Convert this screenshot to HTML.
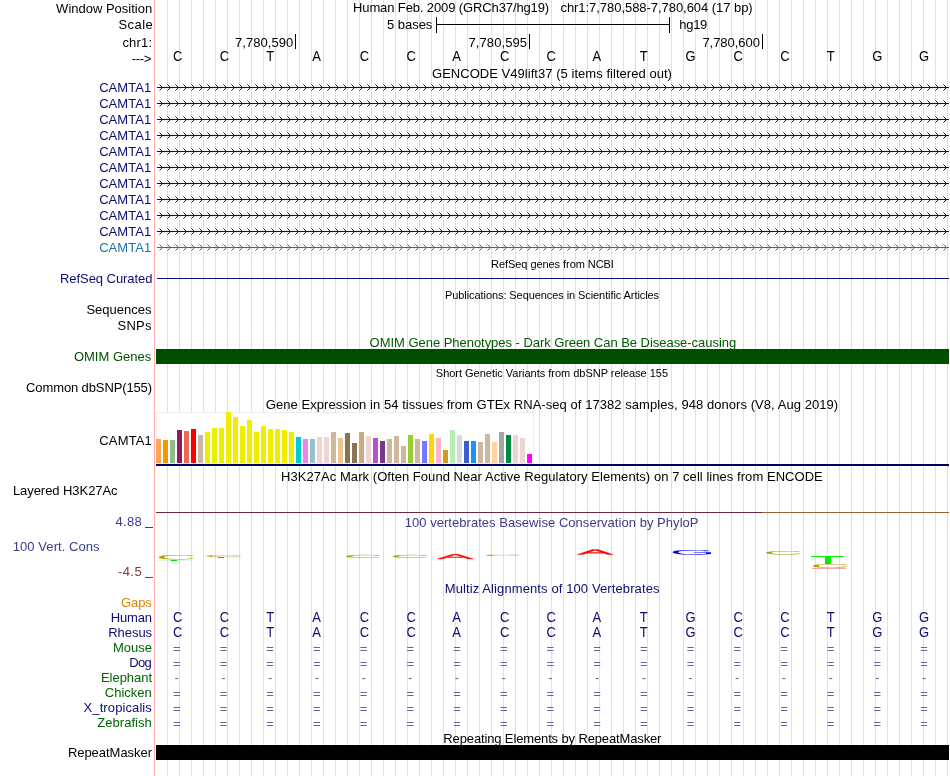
<!DOCTYPE html><html><head><meta charset="utf-8"><style>html,body{margin:0;padding:0;background:#fff;width:950px;height:776px;overflow:hidden}svg{display:block;will-change:transform}text{font-family:"Liberation Sans",sans-serif;font-size:13px}.s{font-size:11px}</style></head><body>
<svg width="950" height="776" viewBox="0 0 950 776">
<defs>
<pattern id="chevN" x="157" y="84" width="8" height="16" patternUnits="userSpaceOnUse"><g fill="rgb(12,12,120)" shape-rendering="crispEdges"><rect x="0" y="3" width="8" height="1"/><rect x="3" y="1" width="1" height="1"/><rect x="4" y="2" width="1" height="3"/><rect x="3" y="5" width="1" height="1"/><rect x="2" y="0" width="1" height="1" fill-opacity="0.45"/><rect x="2" y="6" width="1" height="1" fill-opacity="0.45"/></g></pattern>
<pattern id="chevT" x="157" y="84" width="8" height="16" patternUnits="userSpaceOnUse"><g fill="rgb(30,115,175)" shape-rendering="crispEdges"><rect x="0" y="3" width="8" height="1"/><rect x="3" y="1" width="1" height="1"/><rect x="4" y="2" width="1" height="3"/><rect x="3" y="5" width="1" height="1"/><rect x="2" y="0" width="1" height="1" fill-opacity="0.45"/><rect x="2" y="6" width="1" height="1" fill-opacity="0.45"/></g></pattern>
</defs>
<rect width="950" height="776" fill="#fff"/>
<path d="M167 0h1v776h-1zM179 0h1v776h-1zM191 0h1v776h-1zM203 0h1v776h-1zM215 0h1v776h-1zM227 0h1v776h-1zM239 0h1v776h-1zM251 0h1v776h-1zM263 0h1v776h-1zM275 0h1v776h-1zM287 0h1v776h-1zM299 0h1v776h-1zM311 0h1v776h-1zM323 0h1v776h-1zM335 0h1v776h-1zM347 0h1v776h-1zM359 0h1v776h-1zM371 0h1v776h-1zM383 0h1v776h-1zM395 0h1v776h-1zM407 0h1v776h-1zM419 0h1v776h-1zM431 0h1v776h-1zM443 0h1v776h-1zM455 0h1v776h-1zM467 0h1v776h-1zM479 0h1v776h-1zM491 0h1v776h-1zM503 0h1v776h-1zM515 0h1v776h-1zM527 0h1v776h-1zM539 0h1v776h-1zM551 0h1v776h-1zM563 0h1v776h-1zM575 0h1v776h-1zM587 0h1v776h-1zM599 0h1v776h-1zM611 0h1v776h-1zM623 0h1v776h-1zM635 0h1v776h-1zM647 0h1v776h-1zM659 0h1v776h-1zM671 0h1v776h-1zM683 0h1v776h-1zM695 0h1v776h-1zM707 0h1v776h-1zM719 0h1v776h-1zM731 0h1v776h-1zM743 0h1v776h-1zM755 0h1v776h-1zM767 0h1v776h-1zM779 0h1v776h-1zM791 0h1v776h-1zM803 0h1v776h-1zM815 0h1v776h-1zM827 0h1v776h-1zM839 0h1v776h-1zM851 0h1v776h-1zM863 0h1v776h-1zM875 0h1v776h-1zM887 0h1v776h-1zM899 0h1v776h-1zM911 0h1v776h-1zM923 0h1v776h-1zM935 0h1v776h-1zM947 0h1v776h-1z" fill="rgb(220,220,255)" shape-rendering="crispEdges"/>
<rect x="154" y="0" width="1" height="776" fill="rgb(255,175,175)" shape-rendering="crispEdges"/>
<text id="t1" x="56.12" y="13" fill="#000" textLength="96.04" lengthAdjust="spacing">Window Position</text>
<text id="t2" x="118.40" y="29" fill="#000" textLength="34.34" lengthAdjust="spacing">Scale</text>
<text id="t3" x="122.38" y="47" fill="#000" textLength="29.82" lengthAdjust="spacing">chr1:</text>
<text id="t4" x="131.71" y="63" fill="#000" textLength="19.67" lengthAdjust="spacing">---&gt;</text>
<text id="hf1" x="353.00" y="12" fill="#000" textLength="196.16" lengthAdjust="spacing">Human Feb. 2009 (GRCh37/hg19)</text>
<text id="hf2" x="560.43" y="12" fill="#000" textLength="192.27" lengthAdjust="spacing">chr1:7,780,588-7,780,604 (17 bp)</text>
<text id="t7" x="386.90" y="29" fill="#000" textLength="45.47" lengthAdjust="spacing">5 bases</text>
<text id="t8" x="679.31" y="29" fill="#000" textLength="27.97" lengthAdjust="spacing">hg19</text>
<g fill="#000" shape-rendering="crispEdges">
<rect x="436" y="24" width="234" height="1"/><rect x="436" y="17" width="1" height="16"/><rect x="669" y="17" width="1" height="16"/>
<rect x="295" y="34" width="1" height="15"/>
<rect x="529" y="34" width="1" height="15"/>
<rect x="762" y="34" width="1" height="15"/>
</g>
<text id="t9" x="235.01" y="47" fill="#000" textLength="58.19" lengthAdjust="spacing">7,780,590</text>
<text id="t10" x="468.58" y="47" fill="#000" textLength="58.37" lengthAdjust="spacing">7,780,595</text>
<text id="t11" x="702.40" y="47" fill="#000" textLength="57.53" lengthAdjust="spacing">7,780,600</text>
<text transform="matrix(1,0,0,1.08,177.65,61)" text-anchor="middle" fill="#000">C</text>
<text transform="matrix(1,0,0,1.08,224.36,61)" text-anchor="middle" fill="#000">C</text>
<text transform="matrix(1,0,0,1.08,270.17,61)" text-anchor="middle" fill="#000">T</text>
<text transform="matrix(1,0,0,1.08,316.47,61)" text-anchor="middle" fill="#000">A</text>
<text transform="matrix(1,0,0,1.08,364.48,61)" text-anchor="middle" fill="#000">C</text>
<text transform="matrix(1,0,0,1.08,411.18,61)" text-anchor="middle" fill="#000">C</text>
<text transform="matrix(1,0,0,1.08,456.59,61)" text-anchor="middle" fill="#000">A</text>
<text transform="matrix(1,0,0,1.08,504.60,61)" text-anchor="middle" fill="#000">C</text>
<text transform="matrix(1,0,0,1.08,551.30,61)" text-anchor="middle" fill="#000">C</text>
<text transform="matrix(1,0,0,1.08,596.71,61)" text-anchor="middle" fill="#000">A</text>
<text transform="matrix(1,0,0,1.08,643.81,61)" text-anchor="middle" fill="#000">T</text>
<text transform="matrix(1,0,0,1.08,690.52,61)" text-anchor="middle" fill="#000">G</text>
<text transform="matrix(1,0,0,1.08,738.12,61)" text-anchor="middle" fill="#000">C</text>
<text transform="matrix(1,0,0,1.08,784.83,61)" text-anchor="middle" fill="#000">C</text>
<text transform="matrix(1,0,0,1.08,830.64,61)" text-anchor="middle" fill="#000">T</text>
<text transform="matrix(1,0,0,1.08,877.34,61)" text-anchor="middle" fill="#000">G</text>
<text transform="matrix(1,0,0,1.08,924.05,61)" text-anchor="middle" fill="#000">G</text>
<text id="t12" x="431.98" y="78" fill="#000" textLength="239.95" lengthAdjust="spacing">GENCODE V49lift37 (5 items filtered out)</text>
<text id="t13" x="99.13" y="92" fill="rgb(12,12,120)" textLength="52.03" lengthAdjust="spacing">CAMTA1</text>
<rect x="157" y="84" width="792" height="7" fill="url(#chevN)" shape-rendering="crispEdges"/>
<text id="t14" x="99.13" y="108" fill="rgb(12,12,120)" textLength="52.03" lengthAdjust="spacing">CAMTA1</text>
<rect x="157" y="100" width="792" height="7" fill="url(#chevN)" shape-rendering="crispEdges"/>
<text id="t15" x="99.13" y="124" fill="rgb(12,12,120)" textLength="52.03" lengthAdjust="spacing">CAMTA1</text>
<rect x="157" y="116" width="792" height="7" fill="url(#chevN)" shape-rendering="crispEdges"/>
<text id="t16" x="99.13" y="140" fill="rgb(12,12,120)" textLength="52.03" lengthAdjust="spacing">CAMTA1</text>
<rect x="157" y="132" width="792" height="7" fill="url(#chevN)" shape-rendering="crispEdges"/>
<text id="t17" x="99.13" y="156" fill="rgb(12,12,120)" textLength="52.03" lengthAdjust="spacing">CAMTA1</text>
<rect x="157" y="148" width="792" height="7" fill="url(#chevN)" shape-rendering="crispEdges"/>
<text id="t18" x="99.13" y="172" fill="rgb(12,12,120)" textLength="52.03" lengthAdjust="spacing">CAMTA1</text>
<rect x="157" y="164" width="792" height="7" fill="url(#chevN)" shape-rendering="crispEdges"/>
<text id="t19" x="99.13" y="188" fill="rgb(12,12,120)" textLength="52.03" lengthAdjust="spacing">CAMTA1</text>
<rect x="157" y="180" width="792" height="7" fill="url(#chevN)" shape-rendering="crispEdges"/>
<text id="t20" x="99.13" y="204" fill="rgb(12,12,120)" textLength="52.03" lengthAdjust="spacing">CAMTA1</text>
<rect x="157" y="196" width="792" height="7" fill="url(#chevN)" shape-rendering="crispEdges"/>
<text id="t21" x="99.13" y="220" fill="rgb(12,12,120)" textLength="52.03" lengthAdjust="spacing">CAMTA1</text>
<rect x="157" y="212" width="792" height="7" fill="url(#chevN)" shape-rendering="crispEdges"/>
<text id="t22" x="99.13" y="236" fill="rgb(12,12,120)" textLength="52.03" lengthAdjust="spacing">CAMTA1</text>
<rect x="157" y="228" width="792" height="7" fill="url(#chevN)" shape-rendering="crispEdges"/>
<text id="t23" x="99.13" y="252" fill="rgb(30,115,175)" textLength="51.99" lengthAdjust="spacing">CAMTA1</text>
<rect x="157" y="244" width="792" height="7" fill="url(#chevT)" shape-rendering="crispEdges"/>
<text id="t24" x="491.11" y="268" fill="#000" class="s" textLength="122.76" lengthAdjust="spacing">RefSeq genes from NCBI</text>
<text id="t25" x="60.05" y="283" fill="rgb(12,12,120)" textLength="92.38" lengthAdjust="spacing">RefSeq Curated</text>
<rect x="157" y="278" width="792" height="1" fill="rgb(12,12,120)" shape-rendering="crispEdges"/>
<text id="t26" x="445.02" y="299" fill="#000" class="s" textLength="214.08" lengthAdjust="spacing">Publications: Sequences in Scientific Articles</text>
<text id="t27" x="86.40" y="314" fill="#000" textLength="65.10" lengthAdjust="spacing">Sequences</text>
<text id="t28" x="117.54" y="330" fill="#000" textLength="33.96" lengthAdjust="spacing">SNPs</text>
<text id="t29" x="369.57" y="347" fill="rgb(0,90,0)" textLength="366.61" lengthAdjust="spacing">OMIM Gene Phenotypes - Dark Green Can Be Disease-causing</text>
<text id="t30" x="73.88" y="361" fill="rgb(0,80,0)" textLength="77.47" lengthAdjust="spacing">OMIM Genes</text>
<rect x="156" y="349" width="793" height="15" fill="rgb(0,77,0)" shape-rendering="crispEdges"/>
<text id="t31" x="435.85" y="377" fill="#000" class="s" textLength="232.21" lengthAdjust="spacing">Short Genetic Variants from dbSNP release 155</text>
<text id="t32" x="26.11" y="392" fill="#000" textLength="125.95" lengthAdjust="spacing">Common dbSNP(155)</text>
<text id="t33" x="265.82" y="409" fill="#000" textLength="572.35" lengthAdjust="spacing">Gene Expression in 54 tissues from GTEx RNA-seq of 17382 samples, 948 donors (V8, Aug 2019)</text>
<text id="t34" x="99.31" y="445" fill="#000" textLength="52.52" lengthAdjust="spacing">CAMTA1</text>
<rect x="156" y="412" width="377" height="51" fill="#fff" stroke="none" shape-rendering="crispEdges"/>
<path d="M156 412h377v51h-377z" fill="none" stroke="rgb(238,238,238)" stroke-width="1" transform="translate(0.5,0.5)" />
<g shape-rendering="crispEdges">
<rect x="156" y="439" width="5" height="24" fill="#FFA54F"/>
<rect x="163" y="440" width="5" height="23" fill="#EE9A00"/>
<rect x="170" y="440" width="5" height="23" fill="#8FBC8F"/>
<rect x="177" y="430" width="5" height="33" fill="#8B1C62"/>
<rect x="184" y="431" width="5" height="32" fill="#EE6A50"/>
<rect x="191" y="429" width="5" height="34" fill="#FF0000"/>
<rect x="198" y="435" width="5" height="28" fill="#CDB79E"/>
<rect x="205" y="432" width="5" height="31" fill="#EEEE00"/>
<rect x="212" y="428" width="5" height="35" fill="#EEEE00"/>
<rect x="219" y="428" width="5" height="35" fill="#EEEE00"/>
<rect x="226" y="412" width="5" height="51" fill="#EEEE00"/>
<rect x="233" y="417" width="5" height="46" fill="#EEEE00"/>
<rect x="240" y="426" width="5" height="37" fill="#EEEE00"/>
<rect x="247" y="420" width="5" height="43" fill="#EEEE00"/>
<rect x="254" y="432" width="5" height="31" fill="#EEEE00"/>
<rect x="261" y="426" width="5" height="37" fill="#EEEE00"/>
<rect x="268" y="429" width="5" height="34" fill="#EEEE00"/>
<rect x="275" y="429" width="5" height="34" fill="#EEEE00"/>
<rect x="282" y="430" width="5" height="33" fill="#EEEE00"/>
<rect x="289" y="432" width="5" height="31" fill="#EEEE00"/>
<rect x="296" y="437" width="5" height="26" fill="#00CDCD"/>
<rect x="303" y="439" width="5" height="24" fill="#EE82EE"/>
<rect x="310" y="439" width="5" height="24" fill="#9AC0CD"/>
<rect x="317" y="437" width="5" height="26" fill="#EED5D2"/>
<rect x="324" y="437" width="5" height="26" fill="#EED5D2"/>
<rect x="331" y="432" width="5" height="31" fill="#CDB79E"/>
<rect x="338" y="438" width="5" height="25" fill="#EEC591"/>
<rect x="345" y="433" width="5" height="30" fill="#8B7355"/>
<rect x="352" y="443" width="5" height="20" fill="#8B7355"/>
<rect x="359" y="432" width="5" height="31" fill="#CDAA7D"/>
<rect x="366" y="436" width="5" height="27" fill="#EED5D2"/>
<rect x="373" y="438" width="5" height="25" fill="#B452CD"/>
<rect x="380" y="441" width="5" height="22" fill="#7A378B"/>
<rect x="387" y="439" width="5" height="24" fill="#CDB79E"/>
<rect x="394" y="436" width="5" height="27" fill="#CDB79E"/>
<rect x="401" y="446" width="5" height="17" fill="#CDB79E"/>
<rect x="408" y="435" width="5" height="28" fill="#9ACD32"/>
<rect x="415" y="439" width="5" height="24" fill="#CDB79E"/>
<rect x="422" y="441" width="5" height="22" fill="#7777FF"/>
<rect x="429" y="434" width="5" height="29" fill="#FFD700"/>
<rect x="436" y="438" width="5" height="25" fill="#FFB6C1"/>
<rect x="443" y="450" width="5" height="13" fill="#CD9B1D"/>
<rect x="450" y="430" width="5" height="33" fill="#B4EEB4"/>
<rect x="457" y="435" width="5" height="28" fill="#D9D9D9"/>
<rect x="464" y="441" width="5" height="22" fill="#3A5FCD"/>
<rect x="471" y="441" width="5" height="22" fill="#1E90FF"/>
<rect x="478" y="442" width="5" height="21" fill="#CDB79E"/>
<rect x="485" y="434" width="5" height="29" fill="#CDB79E"/>
<rect x="492" y="442" width="5" height="21" fill="#FFD39B"/>
<rect x="499" y="432" width="5" height="31" fill="#A6A6A6"/>
<rect x="506" y="435" width="5" height="28" fill="#008B45"/>
<rect x="513" y="435" width="5" height="28" fill="#EED5D2"/>
<rect x="520" y="438" width="5" height="25" fill="#EED5D2"/>
<rect x="527" y="454" width="5" height="9" fill="#FF00FF"/>
</g>
<rect x="156" y="464" width="793" height="2" fill="rgb(0,0,100)" shape-rendering="crispEdges"/>
<text id="t35" x="281.09" y="481" fill="#000" textLength="541.70" lengthAdjust="spacing">H3K27Ac Mark (Often Found Near Active Regulatory Elements) on 7 cell lines from ENCODE</text>
<text id="t36" x="12.91" y="495" fill="#000" textLength="104.68" lengthAdjust="spacing">Layered H3K27Ac</text>
<rect x="156" y="512" width="606" height="1" fill="rgb(112,38,62)" shape-rendering="crispEdges"/>
<rect x="762" y="512" width="187" height="1" fill="rgb(150,100,60)" shape-rendering="crispEdges"/>
<text id="t37" x="404.67" y="527" fill="rgb(60,60,140)" textLength="293.83" lengthAdjust="spacing">100 vertebrates Basewise Conservation by PhyloP</text>
<text id="v488" x="115.43" y="526" fill="rgb(60,60,140)" textLength="26.27" lengthAdjust="spacing">4.88</text>
<rect x="145" y="527" width="8" height="1" fill="rgb(60,60,140)" shape-rendering="crispEdges"/>
<text id="t39" x="12.79" y="551" fill="rgb(60,60,140)" textLength="86.80" lengthAdjust="spacing">100 Vert. Cons</text>
<text id="vm45" x="117.98" y="576" fill="rgb(140,50,50)" textLength="23.63" lengthAdjust="spacing">-4.5</text>
<rect x="145" y="577" width="8" height="1" fill="rgb(140,50,50)" shape-rendering="crispEdges"/>
<rect x="157" y="560" width="34" height="1" fill="rgb(0,220,0)" fill-opacity="0.12"/>
<rect x="171" y="560" width="6" height="1" fill="rgb(0,220,0)"/>
<rect x="206" y="557" width="36" height="1" fill="rgb(0,220,0)" fill-opacity="0.12"/>
<rect x="218" y="557" width="6" height="1" fill="rgb(0,220,0)"/>
<g fill="rgb(170,160,0)" >
<path vector-effect="non-scaling-stroke" transform="matrix(0.02776,0,0,-0.00324,155.913,559.535)" d="M792 1274Q558 1274 428.0 1123.5Q298 973 298 711Q298 452 433.5 294.5Q569 137 800 137Q1096 137 1245 430L1401 352Q1314 170 1156.5 75.0Q999 -20 791 -20Q578 -20 422.5 68.5Q267 157 185.5 321.5Q104 486 104 711Q104 1048 286.0 1239.0Q468 1430 790 1430Q1015 1430 1166.0 1342.0Q1317 1254 1388 1081L1207 1021Q1158 1144 1049.5 1209.0Q941 1274 792 1274Z"/>
<path vector-effect="non-scaling-stroke" transform="matrix(0.02737,0,0,-0.00131,203.353,556.974)" d="M792 1274Q558 1274 428.0 1123.5Q298 973 298 711Q298 452 433.5 294.5Q569 137 800 137Q1096 137 1245 430L1401 352Q1314 170 1156.5 75.0Q999 -20 791 -20Q578 -20 422.5 68.5Q267 157 185.5 321.5Q104 486 104 711Q104 1048 286.0 1239.0Q468 1430 790 1430Q1015 1430 1166.0 1342.0Q1317 1254 1388 1081L1207 1021Q1158 1144 1049.5 1209.0Q941 1274 792 1274Z"/>
<path vector-effect="non-scaling-stroke" transform="matrix(0.02760,0,0,-0.00214,343.029,557.857)" d="M792 1274Q558 1274 428.0 1123.5Q298 973 298 711Q298 452 433.5 294.5Q569 137 800 137Q1096 137 1245 430L1401 352Q1314 170 1156.5 75.0Q999 -20 791 -20Q578 -20 422.5 68.5Q267 157 185.5 321.5Q104 486 104 711Q104 1048 286.0 1239.0Q468 1430 790 1430Q1015 1430 1166.0 1342.0Q1317 1254 1388 1081L1207 1021Q1158 1144 1049.5 1209.0Q941 1274 792 1274Z"/>
<path vector-effect="non-scaling-stroke" transform="matrix(0.02760,0,0,-0.00214,389.829,557.857)" d="M792 1274Q558 1274 428.0 1123.5Q298 973 298 711Q298 452 433.5 294.5Q569 137 800 137Q1096 137 1245 430L1401 352Q1314 170 1156.5 75.0Q999 -20 791 -20Q578 -20 422.5 68.5Q267 157 185.5 321.5Q104 486 104 711Q104 1048 286.0 1239.0Q468 1430 790 1430Q1015 1430 1166.0 1342.0Q1317 1254 1388 1081L1207 1021Q1158 1144 1049.5 1209.0Q941 1274 792 1274Z"/>
<path vector-effect="non-scaling-stroke" transform="matrix(0.02675,0,0,-0.00090,483.018,555.982)" d="M792 1274Q558 1274 428.0 1123.5Q298 973 298 711Q298 452 433.5 294.5Q569 137 800 137Q1096 137 1245 430L1401 352Q1314 170 1156.5 75.0Q999 -20 791 -20Q578 -20 422.5 68.5Q267 157 185.5 321.5Q104 486 104 711Q104 1048 286.0 1239.0Q468 1430 790 1430Q1015 1430 1166.0 1342.0Q1317 1254 1388 1081L1207 1021Q1158 1144 1049.5 1209.0Q941 1274 792 1274Z"/>
<path vector-effect="non-scaling-stroke" transform="matrix(0.02699,0,0,-0.00255,763.194,554.649)" d="M792 1274Q558 1274 428.0 1123.5Q298 973 298 711Q298 452 433.5 294.5Q569 137 800 137Q1096 137 1245 430L1401 352Q1314 170 1156.5 75.0Q999 -20 791 -20Q578 -20 422.5 68.5Q267 157 185.5 321.5Q104 486 104 711Q104 1048 286.0 1239.0Q468 1430 790 1430Q1015 1430 1166.0 1342.0Q1317 1254 1388 1081L1207 1021Q1158 1144 1049.5 1209.0Q941 1274 792 1274Z"/>
<path vector-effect="non-scaling-stroke" transform="matrix(0.02760,0,0,-0.00262,810.029,567.748)" d="M792 1274Q558 1274 428.0 1123.5Q298 973 298 711Q298 452 433.5 294.5Q569 137 800 137Q1096 137 1245 430L1401 352Q1314 170 1156.5 75.0Q999 -20 791 -20Q578 -20 422.5 68.5Q267 157 185.5 321.5Q104 486 104 711Q104 1048 286.0 1239.0Q468 1430 790 1430Q1015 1430 1166.0 1342.0Q1317 1254 1388 1081L1207 1021Q1158 1144 1049.5 1209.0Q941 1274 792 1274Z"/>
</g>
<g fill="rgb(255,0,0)" stroke="rgb(255,0,0)" stroke-width="0.4">
<path vector-effect="non-scaling-stroke" transform="matrix(0.02636,0,0,-0.00326,437.295,558.900)" d="M1167 0 1006 412H364L202 0H4L579 1409H796L1362 0ZM685 1265 676 1237Q651 1154 602 1024L422 561H949L768 1026Q740 1095 712 1182Z"/>
<path vector-effect="non-scaling-stroke" transform="matrix(0.02622,0,0,-0.00355,577.295,554.600)" d="M1167 0 1006 412H364L202 0H4L579 1409H796L1362 0ZM685 1265 676 1237Q651 1154 602 1024L422 561H949L768 1026Q740 1095 712 1182Z"/>
</g>
<g fill="rgb(0,0,255)" >
<path vector-effect="non-scaling-stroke" transform="matrix(0.02872,0,0,-0.00331,669.642,554.634)" d="M103 711Q103 1054 287.0 1242.0Q471 1430 804 1430Q1038 1430 1184.0 1351.0Q1330 1272 1409 1098L1227 1044Q1167 1164 1061.5 1219.0Q956 1274 799 1274Q555 1274 426.0 1126.5Q297 979 297 711Q297 444 434.0 289.5Q571 135 813 135Q951 135 1070.5 177.0Q1190 219 1264 291V545H843V705H1440V219Q1328 105 1165.5 42.5Q1003 -20 813 -20Q592 -20 432.0 68.0Q272 156 187.5 321.5Q103 487 103 711Z"/>
</g>
<g fill="rgb(0,240,0)" shape-rendering="crispEdges"><rect x="811" y="556" width="33" height="1"/><rect x="825" y="557" width="6" height="7"/></g>
<rect x="812" y="568" width="34" height="1" fill="rgb(255,60,60)" fill-opacity="0.45" shape-rendering="crispEdges"/>
<text id="t41" x="444.72" y="593" fill="rgb(12,12,120)" textLength="214.79" lengthAdjust="spacing">Multiz Alignments of 100 Vertebrates</text>
<text id="t42" x="121.08" y="607" fill="rgb(230,128,0)" textLength="30.73" lengthAdjust="spacing">Gaps</text>
<text id="t43" x="110.77" y="622" fill="rgb(12,12,120)" textLength="41.20" lengthAdjust="spacing">Human</text>
<text transform="matrix(1,0,0,1.08,177.65,621.5)" text-anchor="middle" fill="rgb(12,12,120)">C</text>
<text transform="matrix(1,0,0,1.08,224.36,621.5)" text-anchor="middle" fill="rgb(12,12,120)">C</text>
<text transform="matrix(1,0,0,1.08,270.17,621.5)" text-anchor="middle" fill="rgb(12,12,120)">T</text>
<text transform="matrix(1,0,0,1.08,316.47,621.5)" text-anchor="middle" fill="rgb(12,12,120)">A</text>
<text transform="matrix(1,0,0,1.08,364.48,621.5)" text-anchor="middle" fill="rgb(12,12,120)">C</text>
<text transform="matrix(1,0,0,1.08,411.18,621.5)" text-anchor="middle" fill="rgb(12,12,120)">C</text>
<text transform="matrix(1,0,0,1.08,456.59,621.5)" text-anchor="middle" fill="rgb(12,12,120)">A</text>
<text transform="matrix(1,0,0,1.08,504.60,621.5)" text-anchor="middle" fill="rgb(12,12,120)">C</text>
<text transform="matrix(1,0,0,1.08,551.30,621.5)" text-anchor="middle" fill="rgb(12,12,120)">C</text>
<text transform="matrix(1,0,0,1.08,596.71,621.5)" text-anchor="middle" fill="rgb(12,12,120)">A</text>
<text transform="matrix(1,0,0,1.08,643.81,621.5)" text-anchor="middle" fill="rgb(12,12,120)">T</text>
<text transform="matrix(1,0,0,1.08,690.52,621.5)" text-anchor="middle" fill="rgb(12,12,120)">G</text>
<text transform="matrix(1,0,0,1.08,738.12,621.5)" text-anchor="middle" fill="rgb(12,12,120)">C</text>
<text transform="matrix(1,0,0,1.08,784.83,621.5)" text-anchor="middle" fill="rgb(12,12,120)">C</text>
<text transform="matrix(1,0,0,1.08,830.64,621.5)" text-anchor="middle" fill="rgb(12,12,120)">T</text>
<text transform="matrix(1,0,0,1.08,877.34,621.5)" text-anchor="middle" fill="rgb(12,12,120)">G</text>
<text transform="matrix(1,0,0,1.08,924.05,621.5)" text-anchor="middle" fill="rgb(12,12,120)">G</text>
<text id="t44" x="108.24" y="637" fill="rgb(12,12,120)" textLength="43.82" lengthAdjust="spacing">Rhesus</text>
<text transform="matrix(1,0,0,1.08,177.65,636.5)" text-anchor="middle" fill="rgb(12,12,120)">C</text>
<text transform="matrix(1,0,0,1.08,224.36,636.5)" text-anchor="middle" fill="rgb(12,12,120)">C</text>
<text transform="matrix(1,0,0,1.08,270.17,636.5)" text-anchor="middle" fill="rgb(12,12,120)">T</text>
<text transform="matrix(1,0,0,1.08,316.47,636.5)" text-anchor="middle" fill="rgb(12,12,120)">A</text>
<text transform="matrix(1,0,0,1.08,364.48,636.5)" text-anchor="middle" fill="rgb(12,12,120)">C</text>
<text transform="matrix(1,0,0,1.08,411.18,636.5)" text-anchor="middle" fill="rgb(12,12,120)">C</text>
<text transform="matrix(1,0,0,1.08,456.59,636.5)" text-anchor="middle" fill="rgb(12,12,120)">A</text>
<text transform="matrix(1,0,0,1.08,504.60,636.5)" text-anchor="middle" fill="rgb(12,12,120)">C</text>
<text transform="matrix(1,0,0,1.08,551.30,636.5)" text-anchor="middle" fill="rgb(12,12,120)">C</text>
<text transform="matrix(1,0,0,1.08,596.71,636.5)" text-anchor="middle" fill="rgb(12,12,120)">A</text>
<text transform="matrix(1,0,0,1.08,643.81,636.5)" text-anchor="middle" fill="rgb(12,12,120)">T</text>
<text transform="matrix(1,0,0,1.08,690.52,636.5)" text-anchor="middle" fill="rgb(12,12,120)">G</text>
<text transform="matrix(1,0,0,1.08,738.12,636.5)" text-anchor="middle" fill="rgb(12,12,120)">C</text>
<text transform="matrix(1,0,0,1.08,784.83,636.5)" text-anchor="middle" fill="rgb(12,12,120)">C</text>
<text transform="matrix(1,0,0,1.08,830.64,636.5)" text-anchor="middle" fill="rgb(12,12,120)">T</text>
<text transform="matrix(1,0,0,1.08,877.34,636.5)" text-anchor="middle" fill="rgb(12,12,120)">G</text>
<text transform="matrix(1,0,0,1.08,924.05,636.5)" text-anchor="middle" fill="rgb(12,12,120)">G</text>
<text id="t45" x="112.98" y="652" fill="rgb(0,100,0)" textLength="39.10" lengthAdjust="spacing">Mouse</text>
<text x="176.75" y="653" text-anchor="middle" fill="rgb(100,100,160)">=</text>
<text x="223.46" y="653" text-anchor="middle" fill="rgb(100,100,160)">=</text>
<text x="270.17" y="653" text-anchor="middle" fill="rgb(100,100,160)">=</text>
<text x="316.87" y="653" text-anchor="middle" fill="rgb(100,100,160)">=</text>
<text x="363.58" y="653" text-anchor="middle" fill="rgb(100,100,160)">=</text>
<text x="410.28" y="653" text-anchor="middle" fill="rgb(100,100,160)">=</text>
<text x="456.99" y="653" text-anchor="middle" fill="rgb(100,100,160)">=</text>
<text x="503.7" y="653" text-anchor="middle" fill="rgb(100,100,160)">=</text>
<text x="550.4" y="653" text-anchor="middle" fill="rgb(100,100,160)">=</text>
<text x="597.11" y="653" text-anchor="middle" fill="rgb(100,100,160)">=</text>
<text x="643.81" y="653" text-anchor="middle" fill="rgb(100,100,160)">=</text>
<text x="690.52" y="653" text-anchor="middle" fill="rgb(100,100,160)">=</text>
<text x="737.23" y="653" text-anchor="middle" fill="rgb(100,100,160)">=</text>
<text x="783.93" y="653" text-anchor="middle" fill="rgb(100,100,160)">=</text>
<text x="830.64" y="653" text-anchor="middle" fill="rgb(100,100,160)">=</text>
<text x="877.34" y="653" text-anchor="middle" fill="rgb(100,100,160)">=</text>
<text x="924.05" y="653" text-anchor="middle" fill="rgb(100,100,160)">=</text>
<text id="t46" x="129.35" y="667" fill="rgb(12,12,120)" textLength="22.44" lengthAdjust="spacing">Dog</text>
<text x="176.75" y="668" text-anchor="middle" fill="rgb(100,100,160)">=</text>
<text x="223.46" y="668" text-anchor="middle" fill="rgb(100,100,160)">=</text>
<text x="270.17" y="668" text-anchor="middle" fill="rgb(100,100,160)">=</text>
<text x="316.87" y="668" text-anchor="middle" fill="rgb(100,100,160)">=</text>
<text x="363.58" y="668" text-anchor="middle" fill="rgb(100,100,160)">=</text>
<text x="410.28" y="668" text-anchor="middle" fill="rgb(100,100,160)">=</text>
<text x="456.99" y="668" text-anchor="middle" fill="rgb(100,100,160)">=</text>
<text x="503.7" y="668" text-anchor="middle" fill="rgb(100,100,160)">=</text>
<text x="550.4" y="668" text-anchor="middle" fill="rgb(100,100,160)">=</text>
<text x="597.11" y="668" text-anchor="middle" fill="rgb(100,100,160)">=</text>
<text x="643.81" y="668" text-anchor="middle" fill="rgb(100,100,160)">=</text>
<text x="690.52" y="668" text-anchor="middle" fill="rgb(100,100,160)">=</text>
<text x="737.23" y="668" text-anchor="middle" fill="rgb(100,100,160)">=</text>
<text x="783.93" y="668" text-anchor="middle" fill="rgb(100,100,160)">=</text>
<text x="830.64" y="668" text-anchor="middle" fill="rgb(100,100,160)">=</text>
<text x="877.34" y="668" text-anchor="middle" fill="rgb(100,100,160)">=</text>
<text x="924.05" y="668" text-anchor="middle" fill="rgb(100,100,160)">=</text>
<text id="t47" x="100.95" y="682" fill="rgb(0,100,0)" textLength="51.08" lengthAdjust="spacing">Elephant</text>
<text x="176.75" y="682" text-anchor="middle" fill="rgb(100,100,160)">-</text>
<text x="223.46" y="682" text-anchor="middle" fill="rgb(100,100,160)">-</text>
<text x="270.17" y="682" text-anchor="middle" fill="rgb(100,100,160)">-</text>
<text x="316.87" y="682" text-anchor="middle" fill="rgb(100,100,160)">-</text>
<text x="363.58" y="682" text-anchor="middle" fill="rgb(100,100,160)">-</text>
<text x="410.28" y="682" text-anchor="middle" fill="rgb(100,100,160)">-</text>
<text x="456.99" y="682" text-anchor="middle" fill="rgb(100,100,160)">-</text>
<text x="503.7" y="682" text-anchor="middle" fill="rgb(100,100,160)">-</text>
<text x="550.4" y="682" text-anchor="middle" fill="rgb(100,100,160)">-</text>
<text x="597.11" y="682" text-anchor="middle" fill="rgb(100,100,160)">-</text>
<text x="643.81" y="682" text-anchor="middle" fill="rgb(100,100,160)">-</text>
<text x="690.52" y="682" text-anchor="middle" fill="rgb(100,100,160)">-</text>
<text x="737.23" y="682" text-anchor="middle" fill="rgb(100,100,160)">-</text>
<text x="783.93" y="682" text-anchor="middle" fill="rgb(100,100,160)">-</text>
<text x="830.64" y="682" text-anchor="middle" fill="rgb(100,100,160)">-</text>
<text x="877.34" y="682" text-anchor="middle" fill="rgb(100,100,160)">-</text>
<text x="924.05" y="682" text-anchor="middle" fill="rgb(100,100,160)">-</text>
<text id="t48" x="104.77" y="697" fill="rgb(0,100,0)" textLength="47.05" lengthAdjust="spacing">Chicken</text>
<text x="176.75" y="698" text-anchor="middle" fill="rgb(100,100,160)">=</text>
<text x="223.46" y="698" text-anchor="middle" fill="rgb(100,100,160)">=</text>
<text x="270.17" y="698" text-anchor="middle" fill="rgb(100,100,160)">=</text>
<text x="316.87" y="698" text-anchor="middle" fill="rgb(100,100,160)">=</text>
<text x="363.58" y="698" text-anchor="middle" fill="rgb(100,100,160)">=</text>
<text x="410.28" y="698" text-anchor="middle" fill="rgb(100,100,160)">=</text>
<text x="456.99" y="698" text-anchor="middle" fill="rgb(100,100,160)">=</text>
<text x="503.7" y="698" text-anchor="middle" fill="rgb(100,100,160)">=</text>
<text x="550.4" y="698" text-anchor="middle" fill="rgb(100,100,160)">=</text>
<text x="597.11" y="698" text-anchor="middle" fill="rgb(100,100,160)">=</text>
<text x="643.81" y="698" text-anchor="middle" fill="rgb(100,100,160)">=</text>
<text x="690.52" y="698" text-anchor="middle" fill="rgb(100,100,160)">=</text>
<text x="737.23" y="698" text-anchor="middle" fill="rgb(100,100,160)">=</text>
<text x="783.93" y="698" text-anchor="middle" fill="rgb(100,100,160)">=</text>
<text x="830.64" y="698" text-anchor="middle" fill="rgb(100,100,160)">=</text>
<text x="877.34" y="698" text-anchor="middle" fill="rgb(100,100,160)">=</text>
<text x="924.05" y="698" text-anchor="middle" fill="rgb(100,100,160)">=</text>
<text id="t49" x="83.55" y="712" fill="rgb(12,12,120)" textLength="68.30" lengthAdjust="spacing">X_tropicalis</text>
<text x="176.75" y="713" text-anchor="middle" fill="rgb(100,100,160)">=</text>
<text x="223.46" y="713" text-anchor="middle" fill="rgb(100,100,160)">=</text>
<text x="270.17" y="713" text-anchor="middle" fill="rgb(100,100,160)">=</text>
<text x="316.87" y="713" text-anchor="middle" fill="rgb(100,100,160)">=</text>
<text x="363.58" y="713" text-anchor="middle" fill="rgb(100,100,160)">=</text>
<text x="410.28" y="713" text-anchor="middle" fill="rgb(100,100,160)">=</text>
<text x="456.99" y="713" text-anchor="middle" fill="rgb(100,100,160)">=</text>
<text x="503.7" y="713" text-anchor="middle" fill="rgb(100,100,160)">=</text>
<text x="550.4" y="713" text-anchor="middle" fill="rgb(100,100,160)">=</text>
<text x="597.11" y="713" text-anchor="middle" fill="rgb(100,100,160)">=</text>
<text x="643.81" y="713" text-anchor="middle" fill="rgb(100,100,160)">=</text>
<text x="690.52" y="713" text-anchor="middle" fill="rgb(100,100,160)">=</text>
<text x="737.23" y="713" text-anchor="middle" fill="rgb(100,100,160)">=</text>
<text x="783.93" y="713" text-anchor="middle" fill="rgb(100,100,160)">=</text>
<text x="830.64" y="713" text-anchor="middle" fill="rgb(100,100,160)">=</text>
<text x="877.34" y="713" text-anchor="middle" fill="rgb(100,100,160)">=</text>
<text x="924.05" y="713" text-anchor="middle" fill="rgb(100,100,160)">=</text>
<text id="t50" x="97.30" y="727" fill="rgb(0,100,0)" textLength="54.47" lengthAdjust="spacing">Zebrafish</text>
<text x="176.75" y="728" text-anchor="middle" fill="rgb(100,100,160)">=</text>
<text x="223.46" y="728" text-anchor="middle" fill="rgb(100,100,160)">=</text>
<text x="270.17" y="728" text-anchor="middle" fill="rgb(100,100,160)">=</text>
<text x="316.87" y="728" text-anchor="middle" fill="rgb(100,100,160)">=</text>
<text x="363.58" y="728" text-anchor="middle" fill="rgb(100,100,160)">=</text>
<text x="410.28" y="728" text-anchor="middle" fill="rgb(100,100,160)">=</text>
<text x="456.99" y="728" text-anchor="middle" fill="rgb(100,100,160)">=</text>
<text x="503.7" y="728" text-anchor="middle" fill="rgb(100,100,160)">=</text>
<text x="550.4" y="728" text-anchor="middle" fill="rgb(100,100,160)">=</text>
<text x="597.11" y="728" text-anchor="middle" fill="rgb(100,100,160)">=</text>
<text x="643.81" y="728" text-anchor="middle" fill="rgb(100,100,160)">=</text>
<text x="690.52" y="728" text-anchor="middle" fill="rgb(100,100,160)">=</text>
<text x="737.23" y="728" text-anchor="middle" fill="rgb(100,100,160)">=</text>
<text x="783.93" y="728" text-anchor="middle" fill="rgb(100,100,160)">=</text>
<text x="830.64" y="728" text-anchor="middle" fill="rgb(100,100,160)">=</text>
<text x="877.34" y="728" text-anchor="middle" fill="rgb(100,100,160)">=</text>
<text x="924.05" y="728" text-anchor="middle" fill="rgb(100,100,160)">=</text>
<text id="t51" x="443.35" y="743" fill="#000" textLength="218.08" lengthAdjust="spacing">Repeating Elements by RepeatMasker</text>
<text id="t52" x="67.88" y="757" fill="#000" textLength="84.14" lengthAdjust="spacing">RepeatMasker</text>
<rect x="156" y="745" width="793" height="15" fill="#000" shape-rendering="crispEdges"/>
</svg></body></html>
